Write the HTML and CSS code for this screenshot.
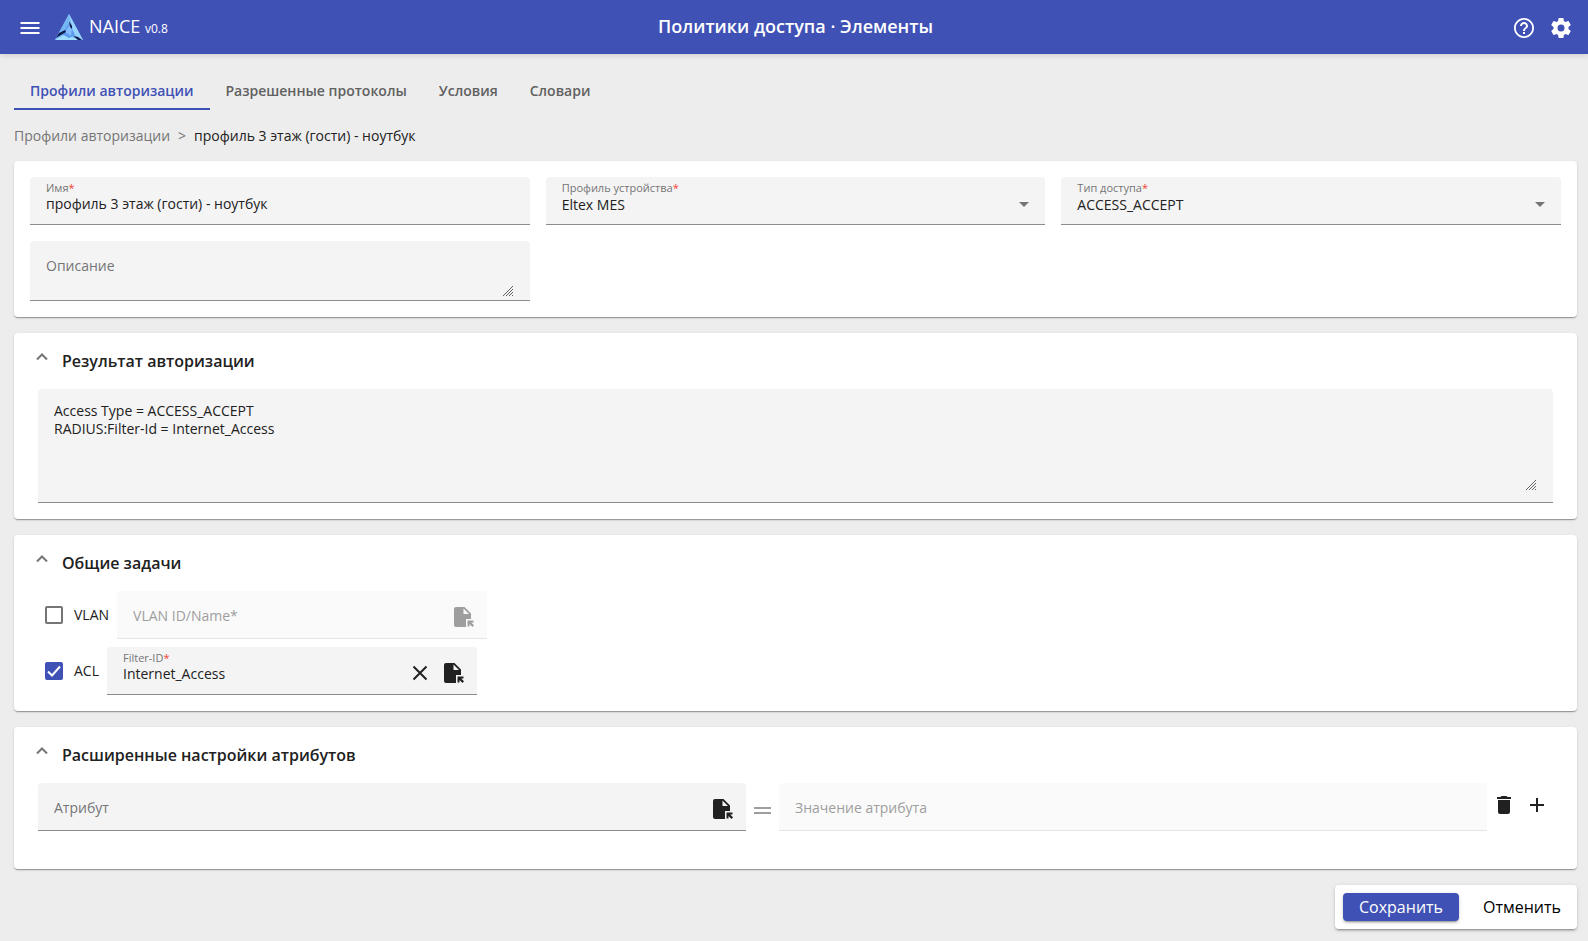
FILE: index.html
```
<!DOCTYPE html>
<html lang="ru">
<head>
<meta charset="utf-8">
<meta name="viewport" content="width=device-width, initial-scale=1">
<title>Политики доступа · Элементы</title>
<link rel="stylesheet" href="styles.css">
</head>
<body>
<svg class="sprite" aria-hidden="true">
  <symbol id="file-pick" viewBox="0 0 20 20">
    <path d="M2 0h8.500l6.500 6.500V12h-5v8H2a2 2 0 0 1-2-2V2a2 2 0 0 1 2-2zM9.500 1.500V7H15z" fill-rule="evenodd"/>
    <path d="M13.500 13.500H19.500v2h-2.300l2.800 2.800L18.500 20l-3-3V19.500h-2z"/>
  </symbol>
  <symbol id="chevron-up" viewBox="0 0 12 8">
    <path d="M1 6.500l5-5 5 5" fill="none" stroke="currentColor" stroke-width="2"/>
  </symbol>
  <symbol id="grip" viewBox="0 0 10 10">
    <path d="M0 10L10 0M3 10l7-7M6 10l4-4M9 10l1-1" fill="none" stroke="currentColor" stroke-width="1"/>
  </symbol>
</svg>

<header class="topbar">
  <div class="topbar-start">
    <button class="icon-button" type="button" aria-label="Меню">
      <svg class="icon-24" viewBox="0 0 24 24"><path fill="currentColor" d="M2.500 6h19v2h-19zM2.500 11h19v2h-19zM2.500 16h19v2h-19z"/></svg>
    </button>
    <svg class="logo" viewBox="0 0 28 26" aria-hidden="true">
      <path d="M14 0L28 26H0z" fill="#7fbcf5"/>
      <path d="M14 0L0 26l8-6 5-10z" fill="#74b6f4"/>
      <path d="M14 0l14 26-9-6-2-8z" fill="#96d2fc"/>
      <path d="M0 26l9-5 7 2 12 3z" fill="#a0dcff"/>
      <path d="M14 9l6 12-6 3-7-4z" fill="#5b98ee"/>
      <path d="M15 10l2 4-1 8-6-4z" fill="#82bcff"/>
      <path d="M14 7l3 5v3l-2-2zM10 16l1 2-5 3-5 3 3-5zM18 22l5 1 4 3h-4z" fill="#101c4c"/>
    </svg>
    <span class="brand">NAICE <small class="version">v0.8</small></span>
  </div>
  <h1 class="topbar-title">Политики доступа · Элементы</h1>
  <div class="topbar-end">
    <button class="icon-button" type="button" aria-label="Справка">
      <svg class="icon-24" viewBox="0 0 24 24"><path fill="currentColor" d="M11 18h2v-2h-2v2zm1-16C6.480 2 2 6.480 2 12s4.480 10 10 10 10-4.480 10-10S17.520 2 12 2zm0 18.200c-4.500 0-8.200-3.700-8.200-8.200S7.500 3.800 12 3.800s8.200 3.700 8.200 8.200-3.700 8.200-8.200 8.200zM12 6c-2.210 0-4 1.790-4 4h2c0-1.100.9-2 2-2s2 .9 2 2c0 2-3 1.750-3 5h2c0-2.250 3-2.500 3-5 0-2.210-1.790-4-4-4z"/></svg>
    </button>
    <button class="icon-button" type="button" aria-label="Настройки">
      <svg class="icon-24" viewBox="0 0 24 24"><path fill="currentColor" d="M12 15.500A3.500 3.500 0 0 1 8.500 12 3.500 3.500 0 0 1 12 8.500a3.500 3.500 0 0 1 3.500 3.500 3.500 3.500 0 0 1-3.500 3.500m7.430-2.530c.04-.32.07-.64.07-.97s-.03-.66-.07-1l2.110-1.630c.19-.15.24-.42.12-.64l-2-3.460c-.12-.22-.39-.31-.61-.22l-2.490 1c-.52-.39-1.060-.73-1.690-.98l-.37-2.650A.506.506 0 0 0 14 2h-4c-.25 0-.46.18-.5.42l-.37 2.650c-.63.25-1.170.59-1.690.98l-2.490-1c-.22-.09-.49 0-.61.22l-2 3.460c-.13.22-.07.49.12.64L4.570 11c-.04.34-.07.67-.07 1s.03.65.07.97l-2.110 1.660c-.19.15-.25.42-.12.64l2 3.460c.12.22.39.3.61.22l2.490-1.010c.52.4 1.060.74 1.690.99l.37 2.650c.04.24.25.42.5.42h4c.25 0 .46-.18.5-.42l.37-2.650c.63-.26 1.170-.59 1.690-.99l2.490 1.010c.22.08.49 0 .61-.22l2-3.460c.12-.22.07-.49-.12-.64z"/></svg>
    </button>
  </div>
</header>

<main class="page">
  <nav class="tabs">
    <a class="tab tab-active" href="#profiles" aria-current="page">Профили авторизации</a>
    <a class="tab" href="#protocols">Разрешенные протоколы</a>
    <a class="tab" href="#conditions">Условия</a>
    <a class="tab" href="#dictionaries">Словари</a>
  </nav>

  <nav class="crumbs" aria-label="Навигация">
    <a class="crumb-link" href="#profiles">Профили авторизации</a>
    <span class="crumb-sep">&gt;</span>
    <span>профиль 3 этаж (гости) - ноутбук</span>
  </nav>

  <form class="form">
    <section class="card card-grid">
      <div class="field">
        <label class="field-label" for="name">Имя<span class="req">*</span></label>
        <input class="field-control" id="name" type="text" value="профиль 3 этаж (гости) - ноутбук">
      </div>
      <div class="field field-select">
        <label class="field-label" for="device">Профиль устройства<span class="req">*</span></label>
        <select class="field-control" id="device"><option>Eltex MES</option></select>
      </div>
      <div class="field field-select">
        <label class="field-label" for="access">Тип доступа<span class="req">*</span></label>
        <select class="field-control" id="access"><option>ACCESS_ACCEPT</option></select>
      </div>
      <div class="field field-area">
        <textarea class="field-text field-text-short" aria-label="Описание" placeholder="Описание"></textarea>
        <svg class="grip"><use href="#grip"/></svg>
      </div>
    </section>

    <section class="card card-section">
      <h2 class="section-head"><button class="section-toggle" type="button"><svg class="chevron"><use href="#chevron-up"/></svg>Результат авторизации</button></h2>
      <div class="section-body">
        <div class="field field-area field-area-tall">
          <textarea class="field-text" aria-label="Результат авторизации" readonly>Access Type = ACCESS_ACCEPT
RADIUS:Filter-Id = Internet_Access</textarea>
          <svg class="grip grip-high"><use href="#grip"/></svg>
        </div>
      </div>
    </section>

    <section class="card card-section">
      <h2 class="section-head"><button class="section-toggle" type="button"><svg class="chevron"><use href="#chevron-up"/></svg>Общие задачи</button></h2>
      <div class="section-body tasks">
        <div class="task">
          <label class="check"><input class="check-box" type="checkbox">VLAN</label>
          <div class="field field-row field-task field-disabled">
            <input class="field-control" type="text" aria-label="VLAN ID/Name" placeholder="VLAN ID/Name*" disabled>
            <button class="icon-button" type="button" aria-label="Выбрать" disabled><svg class="icon-20"><use href="#file-pick"/></svg></button>
          </div>
        </div>
        <div class="task">
          <label class="check"><input class="check-box" type="checkbox" checked>ACL</label>
          <div class="field field-row field-task">
            <div class="field-stack">
              <label class="field-label" for="filter">Filter-ID<span class="req">*</span></label>
              <input class="field-control" id="filter" type="text" value="Internet_Access">
            </div>
            <button class="icon-button" type="button" aria-label="Очистить"><svg class="icon-20" viewBox="0 0 20 20"><path d="M3.500 3.500l13 13M16.500 3.500l-13 13" fill="none" stroke="currentColor" stroke-width="2"/></svg></button>
            <button class="icon-button" type="button" aria-label="Выбрать"><svg class="icon-20"><use href="#file-pick"/></svg></button>
          </div>
        </div>
      </div>
    </section>

    <section class="card card-section card-attributes">
      <h2 class="section-head"><button class="section-toggle" type="button"><svg class="chevron"><use href="#chevron-up"/></svg>Расширенные настройки атрибутов</button></h2>
      <div class="section-body attribute">
        <div class="field field-row">
          <input class="field-control" type="text" aria-label="Атрибут" placeholder="Атрибут">
          <button class="icon-button" type="button" aria-label="Выбрать"><svg class="icon-20"><use href="#file-pick"/></svg></button>
        </div>
        <svg class="equals" viewBox="0 0 17 7" aria-hidden="true"><path fill="currentColor" d="M0 0h17v2H0zM0 5h17v2H0z"/></svg>
        <div class="field field-row field-disabled">
          <input class="field-control" type="text" aria-label="Значение атрибута" placeholder="Значение атрибута" disabled>
        </div>
        <div class="attribute-actions">
          <button class="icon-button" type="button" aria-label="Удалить"><svg class="icon-24" viewBox="0 0 24 24"><path fill="currentColor" d="M6 19c0 1.100.9 2 2 2h8c1.100 0 2-.9 2-2V7H6v12zM19 4h-3.500l-1-1h-5l-1 1H5v2h14V4z"/></svg></button>
          <button class="icon-button" type="button" aria-label="Добавить"><svg class="icon-24" viewBox="0 0 24 24"><path fill="currentColor" d="M19 13h-6v6h-2v-6H5v-2h6V5h2v6h6z"/></svg></button>
        </div>
      </div>
    </section>

    <div class="actions">
      <button class="button button-primary" type="submit">Сохранить</button>
      <button class="button" type="button">Отменить</button>
    </div>
  </form>
</main>
</body>
</html>
```
FILE: styles.css
```
* { box-sizing: border-box; }
body {
  margin: 0;
  background: #ededed;
  color: #212121;
  font: 14px/20px "Open Sans", "Noto Sans", sans-serif;
}
button, input, select, textarea { font: inherit; color: inherit; }
svg { display: block; }
.sprite { display: none; }
.icon-24 { width: 24px; height: 24px; }
.icon-20 { width: 20px; height: 20px; fill: currentColor; }
.icon-button { flex: none; padding: 0; border: 0; background: none; cursor: pointer; }

.topbar {
  display: grid;
  grid-template-columns: 1fr auto 1fr;
  align-items: center;
  height: 54px;
  padding: 0 15px 0 18px;
  background: #3f51b5;
  color: #fff;
  box-shadow: 0 1px 6px rgba(0, 0, 0, .15);
}
.topbar-start { display: flex; align-items: center; gap: 6px; }
.topbar-start .icon-button { margin-right: 7px; padding-top: 2px; }
.logo { width: 28px; height: 26px; }
.brand { font-size: 18px; line-height: 24px; font-weight: 500; }
.version { font-size: 12px; }
.topbar-title { margin: 0; padding-bottom: 2px; font-size: 18px; line-height: 24px; font-weight: 600; }
.topbar-end { display: flex; justify-content: flex-end; gap: 13px; padding-top: 2px; }

.page { padding: 18px 11px 12px 14px; }
.tabs { display: flex; }
.tab {
  padding: 9px 16px 7px;
  border-bottom: 2px solid transparent;
  color: #616161;
  font-weight: 600;
  text-decoration: none;
}
.tab-active { color: #3f51b5; border-color: #3f51b5; }
.crumbs { display: flex; gap: 8px; padding: 16px 0 15px; color: #212121; }
.crumb-link, .crumb-sep { color: #757575; text-decoration: none; }

.form { display: flex; flex-direction: column; gap: 16px; }
.card {
  border-radius: 4px;
  background: #fff;
  box-shadow: 0 2px 1px -1px rgba(0, 0, 0, .2), 0 1px 1px rgba(0, 0, 0, .14), 0 1px 3px rgba(0, 0, 0, .12);
}
.card-grid { display: grid; grid-template-columns: repeat(3, 1fr); gap: 16px; padding: 16px; }
.card-section { padding: 16px 24px; }
.card-attributes { padding-bottom: 38px; }

.field {
  position: relative;
  min-width: 0;
  height: 48px;
  padding: 4px 16px 0;
  border-bottom: 1px solid #8c8c8c;
  border-radius: 4px 4px 0 0;
  background: #f4f4f4;
}
.field-label { display: block; font-size: 11px; line-height: 14px; color: #757575; }
.req { color: #f44336; }
.field-control {
  display: block;
  width: 100%;
  min-width: 0;
  height: 18px;
  padding: 0;
  border: 0;
  outline: 0;
  background: none;
  appearance: none;
}
.field-select::after {
  content: "";
  position: absolute;
  right: 16px;
  bottom: 17px;
  border: 5px solid transparent;
  border-top-color: #757575;
  border-bottom: 0;
  pointer-events: none;
}
.field-control::placeholder, .field-text::placeholder { color: #757575; opacity: 1; }
.field-row { display: flex; align-items: center; gap: 14px; padding: 1px 13px 0 16px; }
.field-row > .field-control { flex: 1; height: 24px; }
.field-row > .icon-button { padding-top: 4px; }
.field-stack { flex: 1; align-self: flex-start; min-width: 0; padding-top: 3px; }
.field-disabled { border-color: #e5e5e5; background: #fafafa; color: #9e9e9e; }
.field-disabled .field-control::placeholder { color: #9e9e9e; }
.field-disabled .icon-button { color: #9e9e9e; }
.field-area { height: 60px; padding-top: 14px; }
.field-area-tall { height: 114px; padding-top: 13px; }
.field-text {
  display: block;
  width: 100%;
  height: 100%;
  padding: 0;
  border: 0;
  outline: 0;
  background: none;
  line-height: 18px;
  resize: none;
}
.field-text-short { height: 36px; padding-top: 2px; }
.grip { position: absolute; right: 17px; bottom: 4px; width: 10px; height: 10px; color: #616161; }
.grip-high { bottom: 12px; }

.section-head { margin: 0; font-size: 16px; line-height: 24px; font-weight: 600; }
.section-toggle { display: flex; gap: 14px; padding: 0; border: 0; background: none; cursor: pointer; font-weight: 600; }
.chevron { width: 12px; height: 8px; margin: 4px 0 0 -2px; color: #757575; }
.section-body { margin-top: 16px; }

.tasks { display: flex; flex-direction: column; gap: 8px; }
.task { display: flex; align-items: center; gap: 8px; padding-left: 7px; }
.check { display: flex; align-items: center; gap: 11px; }
.check-box {
  width: 18px;
  height: 18px;
  margin: 0;
  border: 2px solid #757575;
  border-radius: 2px;
  background: #fff;
  appearance: none;
}
.check-box:checked {
  border-color: #3f51b5;
  background: #3f51b5 url("data:image/svg+xml,%3Csvg xmlns='http://www.w3.org/2000/svg' viewBox='0 0 18 18'%3E%3Cpath d='M3 9.500l4 4 8-9' fill='none' stroke='white' stroke-width='2'/%3E%3C/svg%3E") center / 18px 18px;
  background-origin: border-box;
}
.field-task { flex: 0 1 370px; }

.attribute { display: flex; gap: 8px; }
.attribute > .field { flex: 1; padding-right: 13px; }
.equals { flex: none; align-self: center; width: 17px; height: 7px; margin-top: 7px; color: #9e9e9e; }
.attribute-actions { display: flex; align-items: center; gap: 9px; padding: 0 4px 4px 0; margin-left: -3px; }

.actions {
  display: flex;
  align-self: flex-end;
  gap: 8px;
  padding: 8px 0 8px 8px;
  border-radius: 4px;
  background: #fff;
  box-shadow: 0 3px 1px -2px rgba(0, 0, 0, .2), 0 2px 2px rgba(0, 0, 0, .14), 0 1px 5px rgba(0, 0, 0, .12);
}
.button { height: 28px; padding: 0 16px; border: 0; border-radius: 4px; background: none; color: #000; font-size: 16px; line-height: 24px; font-weight: 500; cursor: pointer; }
.button-primary {
  background: #3f51b5;
  color: #fff;
  box-shadow: 0 3px 1px -2px rgba(0, 0, 0, .2), 0 2px 2px rgba(0, 0, 0, .14), 0 1px 5px rgba(0, 0, 0, .12);
}
```
